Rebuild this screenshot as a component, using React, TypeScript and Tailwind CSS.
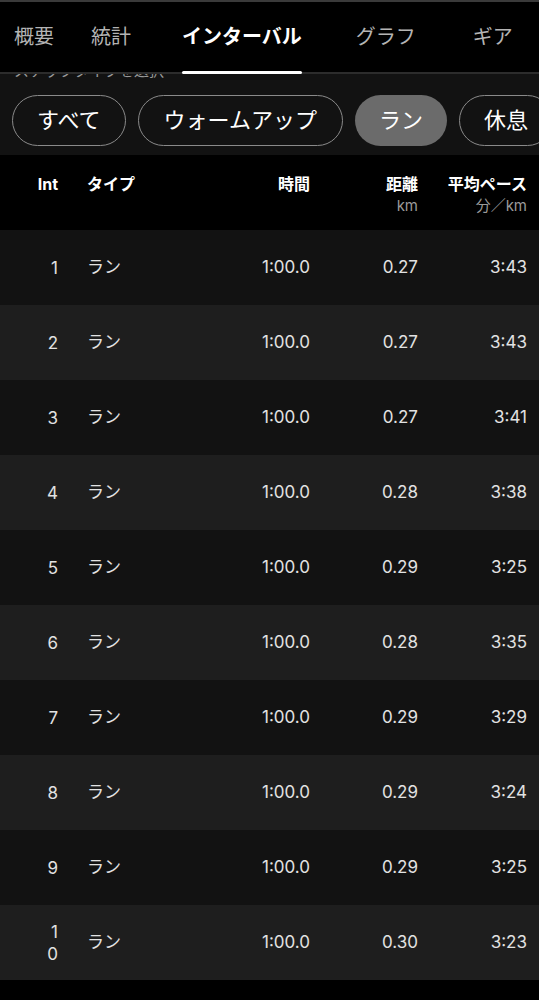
import React from "react";

const tabs = [
    { label: "概要", cls: "ml-[14px]" },
    { label: "統計", cls: "ml-[37px]" },
    { label: "インターバル", cls: "ml-[51px]", active: true },
    { label: "グラフ", cls: "ml-[54px]" },
    { label: "ギア", cls: "ml-[57px]" },
];

const rows = [
    ["1", "3:43", "0.27"],
    ["2", "3:43", "0.27"],
    ["3", "3:41", "0.27"],
    ["4", "3:38", "0.28"],
    ["5", "3:25", "0.29"],
    ["6", "3:35", "0.28"],
    ["7", "3:29", "0.29"],
    ["8", "3:24", "0.29"],
    ["9", "3:25", "0.29"],
    ["10", "3:23", "0.30"],
];

const font = { fontFamily: "Inter, 'Noto Sans CJK JP', sans-serif" };

export default function App() {
    return (
        <div className="w-[539px] h-[1000px] bg-black overflow-hidden text-white" style={font}>
            <div className="h-[2px] bg-[#3a3a3a]" />

            {/* tabs */}
            <div className="flex h-[72px] items-stretch bg-black border-b-2 border-[#2c2c2c] whitespace-nowrap">
                {tabs.map((t) => (
                    <div key={t.label} className={`relative flex items-center ${t.cls}`}>
                        <span className={t.active ? "text-[20px] font-bold text-white" : "text-[20px] text-[#b4b4b4]"}>
                            {t.label}
                        </span>
                        {t.active && <div className="absolute left-0 right-0 -bottom-[2px] h-[3px] bg-white rounded-sm" />}
                    </div>
                ))}
            </div>

            {/* filter */}
            <div className="bg-[#121212] h-[81px]">
                <div className="h-[7px] overflow-hidden pl-[14px]">
                    <div className="-mt-[13px] text-[15px] leading-[20px] text-[#999]">ステップタイプを選択</div>
                </div>
                <div className="flex gap-[12px] pl-[12px] mt-[14px] whitespace-nowrap">
                    <div className="h-[51px] px-[24px] flex items-center rounded-full border-[1.5px] border-[#8a8a8a] text-[22px]">すべて</div>
                    <div className="h-[51px] px-[25px] flex items-center rounded-full border-[1.5px] border-[#8a8a8a] text-[22px]">ウォームアップ</div>
                    <div className="h-[51px] px-[24px] flex items-center rounded-full bg-[#6b6b6b] text-[22px]">ラン</div>
                    <div className="h-[51px] px-[24px] flex items-center rounded-full border-[1.5px] border-[#8a8a8a] text-[22px]">休息</div>
                </div>
            </div>

            {/* header */}
            <div className="flex h-[75px] bg-black pt-[18px] text-[16px] font-bold leading-[22px]">
                <div className="w-[58px] text-right">Int</div>
                <div className="w-[123px] ml-[29px]">タイプ</div>
                <div className="w-[100px] text-right">時間</div>
                <div className="w-[108px] text-right">
                    <div>距離</div>
                    <div className="text-[15px] font-normal text-[#9a9a9a]">km</div>
                </div>
                <div className="w-[109px] text-right">
                    <div>平均ペース</div>
                    <div className="text-[15px] font-normal text-[#9a9a9a]">分／km</div>
                </div>
            </div>

            {/* rows */}
            {rows.map(([n, pace, dist], i) => (
                <div
                    key={n}
                    className={`flex items-center h-[75px] text-[17px] text-[#e2e2e2] ${i % 2 === 0 ? "bg-[#121212]" : "bg-[#1e1e1e]"}`}
                >
                    <div className="w-[14px] ml-[44px] text-right break-all leading-[22px]">{n}</div>
                    <div className="w-[123px] ml-[29px]">ラン</div>
                    <div className="w-[100px] text-right">1:00.0</div>
                    <div className="w-[108px] text-right">{dist}</div>
                    <div className="w-[109px] text-right">{pace}</div>
                </div>
            ))}
        </div>
    );
}
